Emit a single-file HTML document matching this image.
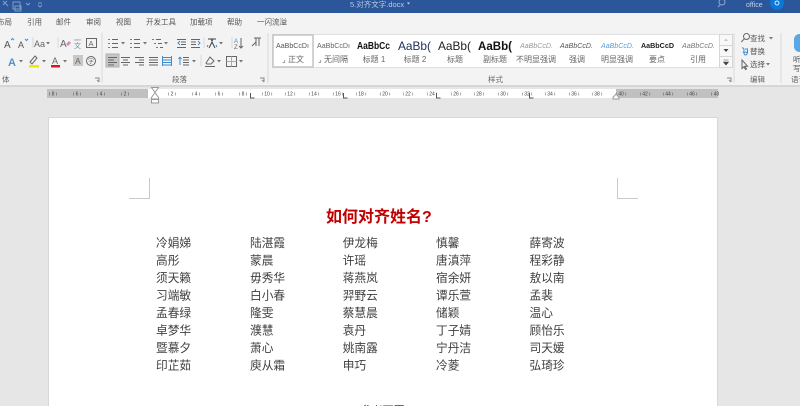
<!DOCTYPE html>
<html lang="zh"><head><meta charset="utf-8"><title>对齐文字</title>
<style>
html,body{margin:0;padding:0;width:800px;height:406px;overflow:hidden;background:#e6e6e6}
svg{display:block;filter:blur(.25px)}
text{font-family:"Liberation Sans","Noto Sans CJK SC",sans-serif}
.t{font-size:7.5px;fill:#555}
.s{font-size:8px;fill:#666;text-anchor:middle}
.r{font-size:5px;fill:#444;text-anchor:middle}
.n{font-size:11.7px;fill:#404040}
.i{stroke:#666;stroke-width:1;fill:none}
.b{stroke:#3f8bd0;stroke-width:1;fill:none}
.d{fill:#777}
</style></head><body>
<svg width="800" height="406" viewBox="0 0 800 406" xmlns="http://www.w3.org/2000/svg">
<rect width="800" height="406" fill="#e6e6e6"/>
<!-- title bar -->
<rect width="800" height="13" fill="#2b579a"/>
<path d="M3 1l5 5M7 1L3 5M13 2h7v7h-7zM15 6h6v5h-6zM26 3l2 2 2-2M38 3h4M38 5l2 2 2-2" stroke="#7f9cc6" fill="none"/>
<text x="350" y="7" font-size="7.5" fill="#b9c9e2">5.对齐文字.docx</text>
<path d="M407 2.500h3l-1.500 2z" fill="#c8d6ea"/>
<circle cx="722" cy="2" r="3" stroke="#8ea8cc" fill="none"/><path d="M720 5l-2 2" stroke="#8ea8cc"/>
<text x="746" y="7" font-size="7" fill="#c4d2e6">office</text>
<circle cx="777" cy="3" r="7" fill="#0b78d8"/><circle cx="777" cy="3" r="2" fill="none" stroke="#d5e8fa"/>
<!-- tabs -->
<rect y="13" width="800" height="73" fill="#f3f3f3"/>
<text class="t" y="24.500"><tspan x="-3">布局</tspan><tspan x="27">引用</tspan><tspan x="56">邮件</tspan><tspan x="86">审阅</tspan><tspan x="116">视图</tspan><tspan x="146">开发工具</tspan><tspan x="190">加载项</tspan><tspan x="227">帮助</tspan><tspan x="257">一闪流溢</tspan></text>
<!-- ribbon separators -->
<path d="M102 33v50M268 33v50M734 33v50M781 33v50M33 37v11M58 37v11M204 37v11M232 37v11M201 55v11" stroke="#d8d8d8"/>
<path d="M0 86h800" stroke="#d6d6d6" stroke-width="2"/>
<!-- font group row 1 -->
<text x="4" y="48" font-size="10" fill="#555">A</text><path d="M11 40l1.500-1.500 1.500 1.500" stroke="#3f8bd0" fill="none"/>
<text x="18" y="48" font-size="9" fill="#555">A</text><path d="M25 39l1.500 1.500 1.500-1.500" stroke="#3f8bd0" fill="none"/>
<text x="34" y="47" font-size="9" fill="#666">Aa</text><path class="d" d="M46 42h4l-2 2.500z"/>
<text x="60" y="47" font-size="10" fill="#666">A</text><path d="M66 44l3-3 2 2-3 3z" fill="#d88bc0"/>
<text x="74" y="41" font-size="4" fill="#999">wén</text><text x="74" y="48" font-size="7" fill="#4f93cc">文</text>
<rect x="86.500" y="38.500" width="10" height="9" class="i"/><text x="88.500" y="46" font-size="7.500" fill="#666">A</text>
<!-- font group row 2 -->
<text x="8" y="66" font-size="11" font-weight="bold" fill="#4f93cc">A</text><path class="d" d="M19 60h4l-2 2.500z"/>
<path d="M30 62l5-6 2 2-5 6z" class="i"/><rect x="29" y="65" width="10" height="2.500" fill="#f2e500"/><path class="d" d="M42 60h4l-2 2.500z"/>
<text x="52" y="64" font-size="9" fill="#666">A</text><rect x="51" y="65" width="9" height="2.500" fill="#e0141e"/><path class="d" d="M63 60h4l-2 2.500z"/>
<rect x="73" y="55" width="10" height="11" fill="#c8c8c8"/><text x="75" y="64" font-size="8.500" fill="#666">A</text>
<circle cx="91" cy="61" r="4.500" class="i"/><text x="88" y="63.500" font-size="6" fill="#666">字</text>
<text x="2" y="82" font-size="7.500" fill="#666">体</text>
<path d="M95 78h4v4M97 80l2 2" stroke="#888" fill="none"/>
<!-- paragraph row 1 -->
<path class="b" d="M108 39.500h2M108 43.500h2M108 47.500h2"/><path class="i" d="M112 39.500h6M112 43.500h6M112 47.500h6"/><path class="d" d="M121 42h4l-2 2.500z"/>
<path class="b" d="M130 39.500h2M130 43.500h2M130 47.500h2"/><path class="i" d="M134 39.500h6M134 43.500h6M134 47.500h6"/><path class="d" d="M143 42h4l-2 2.500z"/>
<path class="b" d="M152 39.500h2M154 43.500h2M156 47.500h2"/><path class="i" d="M156 39.500h5M158 43.500h4M160 47.500h3"/><path class="d" d="M164 42h4l-2 2.500z"/>
<path class="i" d="M177 39.500h9M181 42h5M181 44.500h5M177 47.500h9"/><path class="b" d="M180 41l-2 2 2 2"/>
<path class="i" d="M191 39.500h9M191 42h5M191 44.500h5M191 47.500h9"/><path class="b" d="M198 41l2 2-2 2"/>
<path d="M208 39h3l1 2 1-2h3M209 48l3-6 3 6" stroke="#444" fill="none"/><path class="b" d="M212 38v2M208 45l-1 2M216 45l1 2"/><path class="d" d="M219 42h4l-2 2.500z"/>
<text x="234" y="43" font-size="6" fill="#3f8bd0">A</text><text x="234" y="49" font-size="6" fill="#666">Z</text><path class="i" d="M241 38v10M239 46l2 2 2-2"/>
<path d="M252 46l4-4M256 38v8M259 38v8M254 38h7" stroke="#666" fill="none"/>
<!-- paragraph row 2 -->
<rect x="106" y="54" width="13" height="13" fill="#c6c6c6" stroke="#b0b0b0"/>
<path class="i" d="M108 57.500h9M108 60h6M108 62.500h9M108 65h6"/>
<path class="i" d="M121 57.500h9M123 60h5M121 62.500h9M123 65h5"/>
<path class="i" d="M135 57.500h9M139 60h5M135 62.500h9M139 65h5"/>
<path class="i" d="M149 57.500h9M149 60h9M149 62.500h9M149 65h9"/>
<path class="b" stroke-width="1.200" d="M162 57.500h10M162 60h10M162 62.500h10M162 65h10M162.500 56v10M171.500 56v10"/>
<path class="b" d="M180 57l-1.500 2M180 57l1.500 2M180 57v8"/><path class="i" d="M183 57.500h6M183 60h6M183 62.500h6M183 65h6"/><path class="d" d="M192 60h4l-2 2.500z"/>
<path class="i" d="M206 63l4-6 4 4-3 3h-4zM205 66.500h10"/><path class="d" d="M217 60h4l-2 2.500z"/>
<rect x="226.500" y="56.500" width="10" height="10" class="i"/><path d="M226.500 61.500h10M231.500 56.500v10" stroke="#aaa"/><path class="d" d="M239 60h4l-2 2.500z"/>
<text x="172" y="82" font-size="7.500" fill="#666">段落</text>
<path d="M260 78h4v4M262 80l2 2" stroke="#888" fill="none"/>
<!-- style gallery -->
<rect x="272.500" y="34.500" width="447" height="33" fill="#fff" stroke="#e0e0e0"/>
<rect x="273" y="35" width="40" height="32" fill="#fff" stroke="#c4c4c4" stroke-width="1.500"/>
<g font-size="7.500">
<text x="276" y="48" fill="#555" textLength="33" lengthAdjust="spacingAndGlyphs">AaBbCcDı</text>
<text x="317" y="48" fill="#666" textLength="33" lengthAdjust="spacingAndGlyphs">AaBbCcDı</text>
<text x="357" y="49" fill="#111" font-size="10" font-weight="bold" textLength="33" lengthAdjust="spacingAndGlyphs">AaBbCc</text>
<text x="398" y="50" fill="#1f2f55" font-size="12" textLength="33" lengthAdjust="spacingAndGlyphs">AaBb(</text>
<text x="438" y="50" fill="#222" font-size="12" textLength="33" lengthAdjust="spacingAndGlyphs">AaBb(</text>
<text x="478" y="50" fill="#111" font-size="12" font-weight="bold" textLength="34" lengthAdjust="spacingAndGlyphs">AaBb(</text>
<text x="520" y="48" fill="#999" font-style="italic" textLength="33" lengthAdjust="spacingAndGlyphs">AaBbCcD.</text>
<text x="560" y="48" fill="#555" font-style="italic" textLength="33" lengthAdjust="spacingAndGlyphs">AaBbCcD.</text>
<text x="601" y="48" fill="#5b9bd5" font-style="italic" textLength="33" lengthAdjust="spacingAndGlyphs">AaBbCcD.</text>
<text x="641" y="48" fill="#222" font-weight="bold" textLength="33" lengthAdjust="spacingAndGlyphs">AaBbCcD</text>
<text x="682" y="48" fill="#777" font-style="italic" textLength="33" lengthAdjust="spacingAndGlyphs">AaBbCcD.</text>
</g>
<text class="s" y="62"><tspan x="293">⌟ 正文</tspan><tspan x="333">⌟ 无间隔</tspan><tspan x="374">标题 1</tspan><tspan x="415">标题 2</tspan><tspan x="455">标题</tspan><tspan x="495">副标题</tspan><tspan x="536">不明显强调</tspan><tspan x="577">强调</tspan><tspan x="617">明显强调</tspan><tspan x="657">要点</tspan><tspan x="698">引用</tspan></text>
<rect x="719.500" y="34.500" width="13" height="33" fill="#f8f8f8" stroke="#d6d6d6"/>
<path d="M719.500 45.500h13M719.500 56.500h13" stroke="#d6d6d6"/>
<path d="M724 41l2-2.500 2 2.500z" fill="#c8c8c8"/><path d="M723.500 49h5l-2.500 3z" fill="#444"/><path d="M723.500 60h5M723.500 62h5l-2.500 3z" stroke="#444" stroke-width=".6" fill="#444"/>
<text x="488" y="82" font-size="7.500" fill="#666">样式</text>
<path d="M727 78h4v4M729 80l2 2" stroke="#888" fill="none"/>
<!-- editing group -->
<circle cx="746.500" cy="36.500" r="3" class="i"/><path d="M744.300 38.800l-3 3.200" class="i"/>
<path class="b" d="M742 48c2.500-1 2.500 4 .8 4.500M745 49h2.500v4M745.500 52a1.500 1.500 0 1 0 .1 0"/>
<path d="M742 60v8.500l2-1.800 1.500 2.800 1-.6-1.500-2.700h2.500z" class="i"/>
<text x="750" y="41" font-size="7.500" fill="#555">查找</text><path class="d" d="M769 37h4l-2 2.500z"/>
<text x="750" y="54" font-size="7.500" fill="#555">替换</text>
<text x="750" y="67" font-size="7.500" fill="#555">选择</text><path class="d" d="M766 63h4l-2 2.500z"/>
<text x="750" y="82" font-size="7.500" fill="#666">编辑</text>
<rect x="794" y="34" width="11" height="18" rx="5.500" fill="#5ba7e6"/>
<text x="793" y="62" font-size="7.500" fill="#555">听</text><text x="793" y="71" font-size="7.500" fill="#555">写</text>
<text x="791" y="82" font-size="7.500" fill="#666">语音</text>
<!-- ruler -->
<rect x="47" y="89" width="101" height="9" fill="#c0c0c0"/>
<rect x="148" y="89" width="468" height="9" fill="#fff"/>
<rect x="616" y="89" width="102" height="9" fill="#c0c0c0"/>
<text class="r" y="95.500"><tspan x="53">ı 8 ı</tspan><tspan x="77">ı 6 ı</tspan><tspan x="101">ı 4 ı</tspan><tspan x="125">ı 2 ı</tspan><tspan x="172">ı 2 ı</tspan><tspan x="196">ı 4 ı</tspan><tspan x="219">ı 6 ı</tspan><tspan x="243">ı 8 ı</tspan><tspan x="267">ı 10 ı</tspan><tspan x="290">ı 12 ı</tspan><tspan x="314">ı 14 ı</tspan><tspan x="338">ı 16 ı</tspan><tspan x="361">ı 18 ı</tspan><tspan x="385">ı 20 ı</tspan><tspan x="408">ı 22 ı</tspan><tspan x="432">ı 24 ı</tspan><tspan x="456">ı 26 ı</tspan><tspan x="479">ı 28 ı</tspan><tspan x="503">ı 30 ı</tspan><tspan x="527">ı 32 ı</tspan><tspan x="550">ı 34 ı</tspan><tspan x="574">ı 36 ı</tspan><tspan x="597">ı 38 ı</tspan><tspan x="621">ı 40 ı</tspan><tspan x="645">ı 42 ı</tspan><tspan x="668">ı 44 ı</tspan><tspan x="692">ı 46 ı</tspan><tspan x="715">ı 48</tspan></text>
<path d="M250.500 93v5h4M343.500 93v5h4M436.500 93v5h4M529.500 93v5h4" stroke="#555" fill="none"/>
<path d="M151.500 87.500h7l-3.500 5 3.500 5v1.500h-7v-1.500l3.500-5zM151.500 99.500h7v3.500h-7z" fill="#fff" stroke="#999"/>
<path d="M613 97.500l3-3.500 3 3.500v1.500h-6z" fill="#fff" stroke="#999"/>
<!-- page -->
<rect x="48.500" y="117.500" width="669" height="300" fill="#fff" stroke="#d8d8d8"/>
<path d="M149.500 178v20.500h-20.500M617.500 178v20.500h20.500" stroke="#cacaca" fill="none"/>
<text x="326" y="222" font-size="16" font-weight="bold" fill="#c00000" style="font-family:'Noto Sans CJK SC',sans-serif">如何对齐姓名<tspan font-family="Liberation Sans">?</tspan></text>
<text class="n" y="247"><tspan x="156">冷娟娣</tspan><tspan x="250">陆湛霞</tspan><tspan x="342.700">伊龙梅</tspan><tspan x="436">慎馨</tspan><tspan x="529.500">薛寄波</tspan></text>
<text class="n" y="264.500"><tspan x="156">高彤</tspan><tspan x="250">蒙晨</tspan><tspan x="342.700">许瑶</tspan><tspan x="436">唐滇萍</tspan><tspan x="529.500">程彩静</tspan></text>
<text class="n" y="282"><tspan x="156">须天籁</tspan><tspan x="250">毋秀华</tspan><tspan x="342.700">蒋燕岚</tspan><tspan x="436">宿余妍</tspan><tspan x="529.500">敖以南</tspan></text>
<text class="n" y="299.500"><tspan x="156">习端敏</tspan><tspan x="250">白小春</tspan><tspan x="342.700">羿野云</tspan><tspan x="436">谭乐萱</tspan><tspan x="529.500">孟裴</tspan></text>
<text class="n" y="317"><tspan x="156">孟春绿</tspan><tspan x="250">隆雯</tspan><tspan x="342.700">蔡慧晨</tspan><tspan x="436">储颖</tspan><tspan x="529.500">温心</tspan></text>
<text class="n" y="334.500"><tspan x="156">卓梦华</tspan><tspan x="250">濮慧</tspan><tspan x="342.700">袁丹</tspan><tspan x="436">丁子婧</tspan><tspan x="529.500">顾怡乐</tspan></text>
<text class="n" y="352"><tspan x="156">暨慕夕</tspan><tspan x="250">萧心</tspan><tspan x="342.700">姚南露</tspan><tspan x="436">宁丹洁</tspan><tspan x="529.500">司天媛</tspan></text>
<text class="n" y="369.500"><tspan x="156">印芷茹</tspan><tspan x="250">庾从霜</tspan><tspan x="342.700">申巧</tspan><tspan x="436">冷菱</tspan><tspan x="529.500">弘琦珍</tspan></text>
<text x="357" y="414" font-size="11" fill="#c00000">(参考下图)</text>
</svg>
</body></html>
